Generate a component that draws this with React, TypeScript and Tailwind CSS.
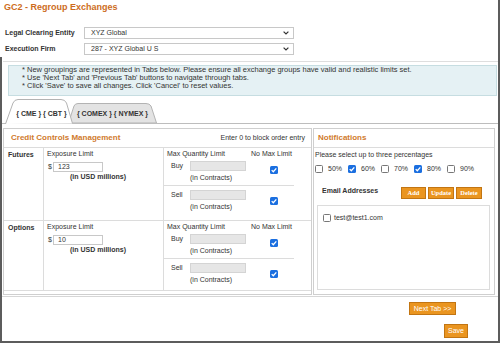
import React from "react"

const font = "font-['Liberation_Sans',Arial,sans-serif]"

function Box({ on }: { on?: boolean }) {
  if (on) {
    return (
      <span className="inline-flex h-[8px] w-[8px] shrink-0 items-center justify-center rounded-[1.5px] bg-[#1b6fe0]">
        <svg viewBox="0 0 8 8" className="h-[8px] w-[8px]">
          <path d="M1.7 4.1 L3.3 5.7 L6.3 2.4" fill="none" stroke="#fff" strokeWidth="1.3" />
        </svg>
      </span>
    )
  }
  return <span className="inline-block h-[8px] w-[8px] shrink-0 rounded-[1.5px] border border-[#777] bg-white" />
}

function Chevron() {
  return (
    <svg viewBox="0 0 6 4" className="h-[4px] w-[6px]">
      <path d="M0.6 0.6 L3 3 L5.4 0.6" fill="none" stroke="#333" strokeWidth="1.2" />
    </svg>
  )
}

function FieldRow({ label, value }: { label: string; value: string }) {
  return (
    <div className="flex h-[12px] items-center">
      <div className="w-[79px] font-bold">{label}</div>
      <div className="flex h-[12px] w-[210px] items-center justify-between border border-[#c8c8c8] bg-white pl-[6px] pr-[4px]">
        <span>{value}</span>
        <Chevron />
      </div>
    </div>
  )
}

function Btn({ children, w }: { children: React.ReactNode; w: string }) {
  return (
    <div
      className={`flex h-[12px] ${w} items-center justify-center border border-[#c27512] bg-[#ea9520] font-['Liberation_Serif','Times_New_Roman',serif] text-[6.5px] font-bold text-white`}
    >
      {children}
    </div>
  )
}

function QtyBlock({ label, checkTop }: { label: string; checkTop: string }) {
  return (
    <div>
      <div className="flex h-[10px] items-start">
        <span className="w-[23px] pl-[4px] pt-[1px]">{label}</span>
        <div className="h-[10px] w-[56px] border border-[#d4d4d4] bg-[#e6e6e6]" />
        <span className={`ml-[24px] ${checkTop}`}>
          <Box on />
        </span>
      </div>
      <div className="ml-[23px] mt-[3px]">(in Contracts)</div>
    </div>
  )
}

function LimitRow({ name, value, h }: { name: string; value: string; h: string }) {
  return (
    <div className={`flex ${h} border-b border-[#dcdcdc]`}>
      <div className="w-[40px] border-r border-[#dcdcdc] pl-[4px] pt-[3px] font-bold">{name}</div>
      <div className="w-[120px] border-r border-[#dcdcdc] pl-[3px] pt-[2px]">
        <div>Exposure Limit</div>
        <div className="mt-[4px] flex items-center">
          <span className="w-[6px] pl-[1px]">$</span>
          <div className="flex h-[10px] w-[50px] items-center border border-[#c8c8c8] bg-white pl-[4px]">{value}</div>
        </div>
        <div className="ml-[23px] mt-[1px] font-bold">(in USD millions)</div>
      </div>
      <div className="flex-1 pl-[3px] pt-[2px]">
        <div className="flex">
          <span className="w-[84px]">Max Quantity Limit</span>
          <span>No Max Limit</span>
        </div>
        <div className="mt-[3px]">
          <QtyBlock label="Buy" checkTop="mt-[5px]" />
        </div>
        <div className="-ml-[3px] mt-[3px] w-[130px] border-t border-[#dcdcdc]" />
        <div className="mt-[4px]">
          <QtyBlock label="Sell" checkTop="mt-[7px]" />
        </div>
      </div>
    </div>
  )
}

export default function App() {
  const pcts = [
    { v: "50%", on: false },
    { v: "60%", on: true },
    { v: "70%", on: false },
    { v: "80%", on: true },
    { v: "90%", on: false },
  ]
  return (
    <div
      className={`relative h-[343px] w-[500px] overflow-hidden border-b-2 border-r-2 border-[#5c5c5c] bg-white ${font} text-[7px] leading-[8px] text-[#333]`}
    >
      <div className="absolute bottom-0 left-0 top-[57px] w-[2px] bg-[#5c5c5c]" />

      <div className="pl-[4px] pt-[2px] text-[9px] font-bold leading-[11px] text-[#cd6c1d]">GC2 - Regroup Exchanges</div>

      <div className="mt-[14px] flex flex-col gap-[4px] pl-[5px]">
        <FieldRow label="Legal Clearing Entity" value="XYZ Global" />
        <FieldRow label="Execution Firm" value="287 - XYZ Global U S" />
      </div>

      <div className="ml-[3px] mt-[6px] border-t border-[#dedede]" />

      <div className="ml-[8px] mt-[3px] w-[489px] border border-[#c6dde1] bg-[#e5f1f4] pb-[5px] pl-[13px] text-[7.5px]">
        <div>* New groupings are represented in Tabs below. Please ensure all exchange groups have valid and realistic limits set.</div>
        <div>* Use 'Next Tab' and 'Previous Tab' buttons to navigate through tabs.</div>
        <div>* Click 'Save' to save all changes. Click 'Cancel' to reset values.</div>
      </div>

      {/* tabs */}
      <div className="mt-[4px] flex h-[24px] items-end border-b border-[#bdbdbd] pl-[5px]">
        <div className="relative z-10 h-[24px] w-[68px] pl-[5px] pt-[11px] text-center font-bold">
          <svg className="absolute left-0 top-0 h-[25px] w-[68px]" viewBox="0 0 68 25">
            <path d="M0.5 25 L8 4 Q9.5 0.5 13 0.5 L56 0.5 Q60 0.5 61.5 4 L67.5 24.5" fill="#fff" stroke="#b3b3b3" />
          </svg>
          <span className="relative">{"{ CME } { CBT }"}</span>
        </div>
        <div className="relative -ml-[5px] h-[20px] w-[89px] pt-[7px] text-center font-bold">
          <svg className="absolute left-0 top-0 h-[20px] w-[89px]" viewBox="0 0 89 20">
            <path d="M0.5 20 L6 3 Q7 0.5 10 0.5 L78 0.5 Q81.5 0.5 83 3 L88.5 20 Z" fill="#e3e3e3" stroke="#b3b3b3" />
          </svg>
          <span className="relative">{"{ COMEX } { NYMEX }"}</span>
        </div>
      </div>

      {/* tab content */}
      <div className="flex gap-[1px] border-b border-[#d6d6d6] pb-[1px] pl-[3px] pt-[4px]">
        <div className="h-[167px] w-[309px] border border-[#cfcfcf] pb-[3px]">
          <div className="flex h-[19px] items-center justify-between border-b border-[#dcdcdc] pl-[7px] pr-[6px]">
            <span className="text-[8px] font-bold leading-[10px] text-[#d07a2c]">Credit Controls Management</span>
            <span>Enter 0 to block order entry</span>
          </div>
          <LimitRow name="Futures" value="123" h="h-[73px]" />
          <LimitRow name="Options" value="10" h="h-[70px]" />
        </div>

        <div className="h-[167px] w-[182px] border border-[#cfcfcf]">
          <div className="flex h-[19px] items-center border-b border-[#dcdcdc] pl-[4px]">
            <span className="text-[8px] font-bold leading-[10px] text-[#d07a2c]">Notifications</span>
          </div>
          <div className="pl-[1px] pt-[3px]">Please select up to three percentages</div>
          <div className="mt-[6px] flex h-[8px] items-center pl-[1px]">
            {pcts.map((p) => (
              <div key={p.v} className="flex w-[33px] items-center">
                <Box on={p.on} />
                <span className="ml-[5px]">{p.v}</span>
              </div>
            ))}
          </div>
          <div className="mt-[14px] flex items-start">
            <span className="w-[87px] pl-[8px] font-bold">Email Addresses</span>
            <div className="flex gap-[2px]">
              <Btn w="w-[25px]">Add</Btn>
              <Btn w="w-[26px]">Update</Btn>
              <Btn w="w-[26px]">Delete</Btn>
            </div>
          </div>
          <div className="ml-[3px] mt-[6px] h-[85px] w-[173px] border border-[#dcdcdc] pl-[5px] pt-[8px]">
            <div className="flex items-center">
              <Box />
              <span className="ml-[3px]">test@test1.com</span>
            </div>
          </div>
        </div>
      </div>

      <div className="mt-[5px] flex justify-end pr-[42px]">
        <div className="flex h-[13px] w-[47px] items-center justify-center border border-[#c27512] bg-[#ea9520] text-white">
          {"Next Tab >>"}
        </div>
      </div>
      <div className="mt-[9px] flex justify-end pr-[30px]">
        <div className="flex h-[14px] w-[24px] items-center justify-center border border-[#c27512] bg-[#ea9520] text-white">
          Save
        </div>
      </div>
    </div>
  )
}
